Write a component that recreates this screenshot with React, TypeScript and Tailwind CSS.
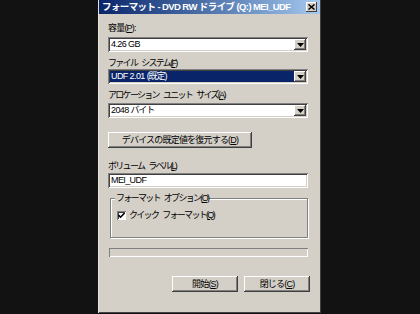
import React from "react";

const FONT = { fontFamily: '"Liberation Sans","Noto Sans CJK JP",sans-serif' };

function Sp() {
  return <span className="inline-block w-[4px]" />;
}

function Arrow() {
  return (
    <div className="w-[12px] h-full bg-[#d4d0c8] shadow-[inset_-1px_-1px_0_#404040,inset_1px_1px_0_#fff,inset_-2px_-2px_0_#808080] flex items-center justify-center">
      <svg width="7" height="4" viewBox="0 0 7 4"><path d="M0 0h7L3.5 4z" fill="#000" /></svg>
    </div>
  );
}

function Combo({ text, selected }: { text: React.ReactNode; selected?: boolean }) {
  return (
    <div className="w-[200px] h-[15px] bg-white shadow-[inset_1px_1px_0_#808080,inset_-1px_-1px_0_#fff,inset_2px_2px_0_#404040,inset_-2px_-2px_0_#d4d0c8] p-[2px] flex">
      <div className={`flex-1 flex items-center pl-[1px] ${selected ? "bg-[#0a246a] text-white" : "text-black"}`}>
        <span className="leading-[11px]">{text}</span>
      </div>
      <Arrow />
    </div>
  );
}

function Btn({ children, w }: { children: React.ReactNode; w: string }) {
  return (
    <div className={`${w} h-[16px] bg-[#d4d0c8] shadow-[inset_-1px_-1px_0_#404040,inset_1px_1px_0_#fff,inset_-2px_-2px_0_#808080] flex items-center justify-center text-black leading-[12px]`}>
      {children}
    </div>
  );
}

export default function App() {
  return (
    <div className="w-[420px] h-[314px] bg-[#121212] flex" style={FONT}>
      <div className="ml-[98px] w-[223px] h-[313px] bg-[#d4d0c8] shadow-[inset_1px_0_0_#e6e3dc,inset_-1px_-1px_0_#404040] flex flex-col text-[9px] tracking-[-0.6px] text-black">
        <div className="h-[14px] mx-[1px] bg-gradient-to-r from-[#0a246a] to-[#a6caf0] flex items-center pl-[3px] pr-[3px]">
          <span className="flex-1 text-white font-bold text-[9.5px] leading-[12px] whitespace-nowrap">
            フォーマット - DVD RW ドライブ (Q:) MEI_UDF
          </span>
          <div className="w-[11px] h-[10px] bg-[#d4d0c8] shadow-[inset_-1px_-1px_0_#404040,inset_1px_1px_0_#fff] flex items-center justify-center">
            <svg width="7" height="6" viewBox="0 0 7 6"><path d="M0.5 0.5l6 5M6.5 0.5l-6 5" stroke="#000" strokeWidth="1.5" /></svg>
          </div>
        </div>
        <div className="pl-[10px] flex flex-col">
          <div className="mt-[8px] leading-[12px] h-[12px] tracking-[-0.8px]">容量(<u>P</u>):</div>
          <div className="mt-[3px]"><Combo text="4.26 GB" /></div>
          <div className="mt-[5px] leading-[12px] h-[12px] tracking-[-1.7px] whitespace-nowrap">ファイル<Sp />システム(<u>F</u>)</div>
          <div className="mt-[0px]"><Combo text={<span>UDF 2.01 <span className="tracking-[-1px]">(既定)</span></span>} selected /></div>
          <div className="mt-[5px] leading-[12px] h-[12px] tracking-[-1.7px] whitespace-nowrap">アロケーション<Sp />ユニット<Sp />サイズ(<u>A</u>)</div>
          <div className="mt-[2px]"><Combo text={<span>2048 <span className="tracking-[-1.2px]">バイト</span></span>} /></div>
          <div className="mt-[14px]"><Btn w="w-[144px]"><span className="tracking-[-0.8px]">デバイスの既定値を復元する(<u>D</u>)</span></Btn></div>
          <div className="mt-[12px] leading-[12px] h-[12px] tracking-[-1.7px] whitespace-nowrap">ボリューム<Sp />ラベル(<u>L</u>)</div>
          <div className="mt-[1px] w-[200px] h-[15px] bg-white shadow-[inset_1px_1px_0_#808080,inset_-1px_-1px_0_#fff,inset_2px_2px_0_#404040,inset_-2px_-2px_0_#d4d0c8] flex items-center pl-[3px] leading-[11px]">
            MEI_UDF
          </div>
          <div className="relative mt-[10px] ml-[2px] w-[198px] h-[40px] border border-[#808080] shadow-[1px_1px_0_#fff,inset_1px_1px_0_#fff]">
            <div className="absolute left-[4px] top-[-7px] bg-[#d4d0c8] px-[1px] leading-[12px] tracking-[-1.7px] whitespace-nowrap">フォーマット<Sp />オプション(<u>O</u>)</div>
            <div className="flex items-center mt-[10px] ml-[6px]">
              <div className="w-[9px] h-[9px] bg-white shadow-[inset_1px_1px_0_#808080,inset_-1px_-1px_0_#fff,inset_2px_2px_0_#404040] flex items-center justify-center">
                <svg width="7" height="7" viewBox="0 0 7 7"><path d="M0.5 3l2 2.2L6.5 1" stroke="#000" strokeWidth="1.6" fill="none" /></svg>
              </div>
              <span className="ml-[3px] leading-[12px] tracking-[-1.7px] whitespace-nowrap">クイック<Sp />フォーマット(<u>Q</u>)</span>
            </div>
          </div>
          <div className="mt-[10px] ml-[1px] w-[199px] h-[9px] shadow-[inset_1px_1px_0_#808080,inset_-1px_-1px_0_#fff]" />
          <div className="mt-[19px] flex justify-end pr-[0px] w-[202px] gap-[6px]">
            <Btn w="w-[66px]"><span className="tracking-[-0.8px]">開始(<u>S</u>)</span></Btn>
            <Btn w="w-[66px]"><span className="tracking-[-0.8px]">閉じる(<u>C</u>)</span></Btn>
          </div>
        </div>
      </div>
    </div>
  );
}
